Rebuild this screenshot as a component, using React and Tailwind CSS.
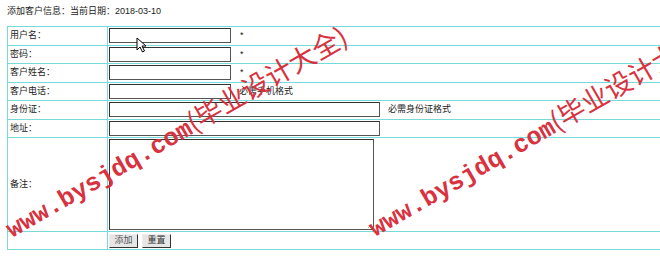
import React from "react";

const font = { fontFamily: '"Liberation Sans", "Noto Sans CJK SC", sans-serif' };

function Row({ label, children, h = "h-[18.5px]" }) {
  return (
    <div className={`flex ${h} border-b border-[#78d9d9]`}>
      <div className="w-[100px] shrink-0 border-r border-[#78d9d9] flex items-center pl-[2px] text-[9px] text-[#222]">
        {label}
      </div>
      <div className="flex items-center pl-[1px] text-[9px] text-[#222]">{children}</div>
    </div>
  );
}

const inputCls = "h-[15px] border border-[#555] border-t-[#333] border-l-[#333] bg-white shrink-0";

function Watermark({ className }) {
  return (
    <div
      className={`absolute whitespace-nowrap origin-left -rotate-[30deg] leading-[26px] text-[#d9323f] pointer-events-none ${className}`}
    >
      <span style={{ fontFamily: '"Liberation Mono", monospace' }} className="font-bold text-[25px]">www.bysjdq.com</span>
      <span style={{ fontFamily: '"Noto Sans CJK SC", sans-serif' }} className="text-[27px]">(毕业设计大全)</span>
    </div>
  );
}

export default function App() {
  return (
    <div className="relative w-[660px] h-[259px] overflow-hidden bg-white" style={font}>
      <div className="h-[26px] pl-[7px] flex items-center pb-[3px] text-[9px] text-[#222]">
        <span>添加客户信息：</span>
        <span>当前日期：</span>
        <span>2018-03-10</span>
      </div>
      <div className="ml-[7px] w-[720px] border-l border-t border-[#78d9d9]">
        <Row label="用户名：">
          <div className={`${inputCls} w-[122px]`} />
          <span className="ml-[9px]">*</span>
        </Row>
        <Row label="密码：">
          <div className={`${inputCls} w-[122px]`} />
          <span className="ml-[9px]">*</span>
        </Row>
        <Row label="客户姓名：">
          <div className={`${inputCls} w-[122px]`} />
          <span className="ml-[9px]">*</span>
        </Row>
        <Row label="客户电话：">
          <div className={`${inputCls} w-[122px]`} />
          <span className="ml-[8px]">必需手机格式</span>
        </Row>
        <Row label="身份证：">
          <div className={`${inputCls} w-[271px]`} />
          <span className="ml-[8px]">必需身份证格式</span>
        </Row>
        <Row label="地址：">
          <div className={`${inputCls} w-[271px]`} />
        </Row>
        <Row label="备注：" h="h-[94px]">
          <div className="relative w-[265px] h-[91px] border border-[#555] border-t-[#333] border-l-[#333] bg-white">
            <svg className="absolute right-0 bottom-0" width="6" height="6" viewBox="0 0 6 6">
              <path d="M5 1L1 5M5 3L3 5" stroke="#999" strokeWidth="0.8" />
            </svg>
          </div>
        </Row>
        <Row label="" h="h-[18px]">
          <div className="flex gap-[4px]">
            <button className="w-[29px] h-[14px] bg-[#e6e6e6] border border-t-[#eee] border-l-[#eee] border-r-[#333] border-b-[#333] text-[9px] leading-none text-[#555] flex items-center justify-center">
              添加
            </button>
            <button className="w-[29px] h-[14px] bg-[#e6e6e6] border border-t-[#eee] border-l-[#eee] border-r-[#333] border-b-[#333] text-[9px] leading-none text-[#333] flex items-center justify-center">
              重置
            </button>
          </div>
        </Row>
      </div>

      <svg className="absolute left-[136px] top-[37px]" width="11" height="16" viewBox="0 0 11 16">
        <path d="M1 1L1 13L4 10L6.5 15L8.5 14L6 9L10 9Z" fill="#fff" stroke="#000" strokeWidth="1" strokeLinejoin="round" />
      </svg>

      <Watermark className="left-[8px] top-[215px]" />
      <Watermark className="left-[371px] top-[214px]" />
    </div>
  );
}
